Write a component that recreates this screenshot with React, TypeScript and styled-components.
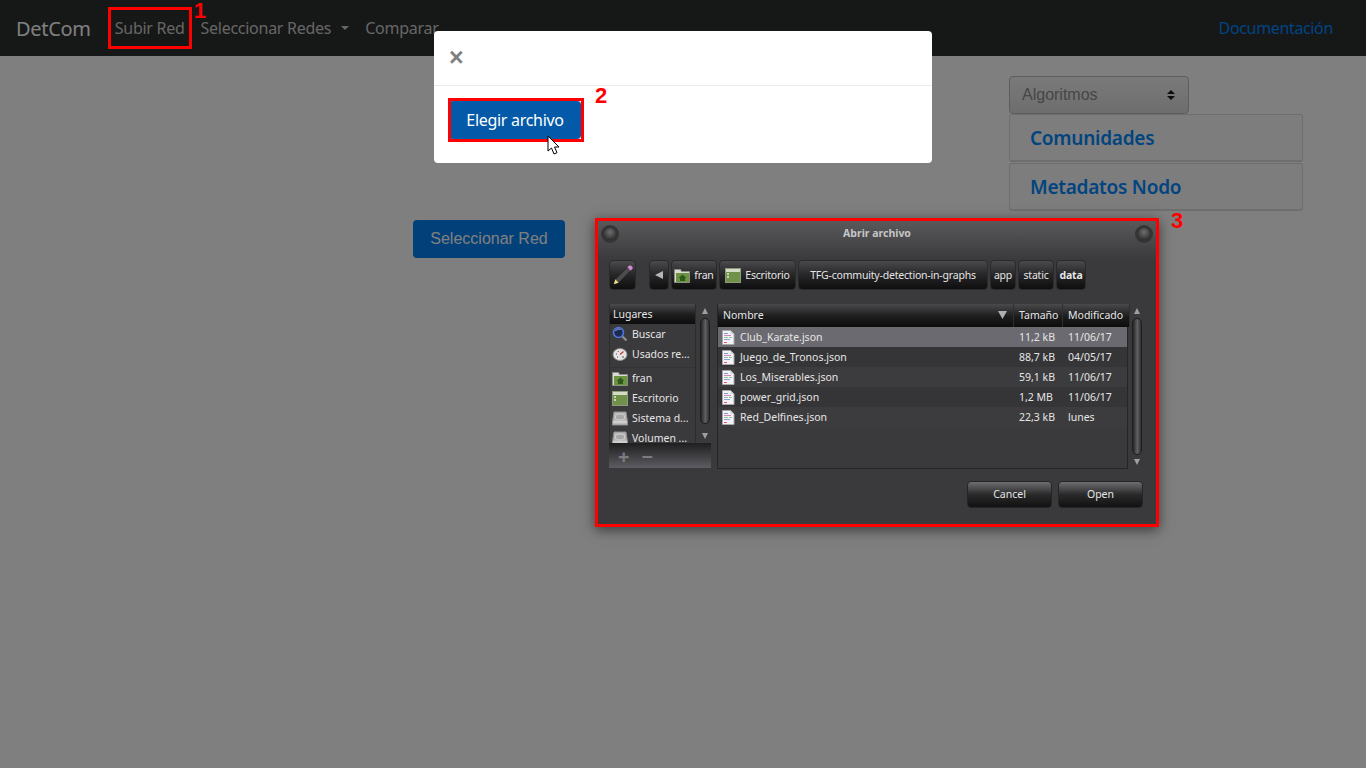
import React from 'react';
import styled, { createGlobalStyle } from 'styled-components';

const UI_FONT = '"Noto Sans", "Open Sans", sans-serif';

const GlobalStyle = createGlobalStyle`
    html, body {
        margin: 0;
        padding: 0;
        background: #fff;
        font-family: ${UI_FONT};
        overflow: hidden;
    }
    * {
        box-sizing: border-box;
    }
`;

const PLACES = [
    { label: 'Buscar', icon: 'search' },
    { label: 'Usados re...', icon: 'recent', separated: true },
    { label: 'fran', icon: 'home' },
    { label: 'Escritorio', icon: 'desktop' },
    { label: 'Sistema d...', icon: 'drive' },
    { label: 'Volumen ...', icon: 'drive' },
];

const FILES = [
    { name: 'Club_Karate.json', size: '11,2 kB', date: '11/06/17' },
    { name: 'Juego_de_Tronos.json', size: '88,7 kB', date: '04/05/17' },
    { name: 'Los_Miserables.json', size: '59,1 kB', date: '11/06/17' },
    { name: 'power_grid.json', size: '1,2 MB', date: '11/06/17' },
    { name: 'Red_Delfines.json', size: '22,3 kB', date: 'lunes' },
];

const FileIcon = () => (
    <svg width="14" height="15" viewBox="0 0 14 15">
        <path d="M1.500.5h8l3.500 3.500v10.500h-11.500z" fill="#f4f4f8" stroke="#a8a8ac" />
        <path d="M9.500.5v3.500h3.500z" fill="#d4d4d8" />
        <path d="M3 3.500h4" stroke="#7b9bd2" />
        <path d="M3 5.500h7" stroke="#cf86c2" />
        <path d="M3 7.500h4M8 7.500h3" stroke="#8ec29a" />
        <path d="M3 9.500h6" stroke="#8aa4dc" />
        <path d="M3 12.500h3" stroke="#ea5a52" />
    </svg>
);

const PlaceIcon: React.FC<{ kind: string }> = ({ kind }) => {
    if (kind === 'search') {
        return (
            <svg width="16" height="16" viewBox="0 0 16 16">
                <circle cx="6.500" cy="6.500" r="5" fill="#1d2b52" stroke="#4f78d8" strokeWidth="1.600" />
                <path d="M3.500 5a3.500 3.500 0 0 1 5-1.500" stroke="#9fb6ee" fill="none" />
                <path d="M10.500 10.500l4 4" stroke="#8c8c8c" strokeWidth="2.400" />
            </svg>
        );
    }
    if (kind === 'recent') {
        return (
            <svg width="16" height="16" viewBox="0 0 16 16">
                <ellipse cx="8" cy="8.500" rx="7" ry="6" fill="#e4e4e4" stroke="#8a8a8a" />
                <path d="M8 8.500l3.500-3" stroke="#c0392b" strokeWidth="1.200" />
                <path d="M4 8h1M6 5l.5 1M10 11h2M5 11h1" stroke="#555" />
            </svg>
        );
    }
    if (kind === 'home') {
        return (
            <svg width="16" height="15" viewBox="0 0 16 15">
                <path d="M.5 1.500h6l1 2h8v11h-15z" fill="#d9dcd4" stroke="#8a8d84" />
                <rect x="2" y="5" width="13" height="9" fill="#6c9440" />
                <path d="M4.500 10l4-3.500 4 3.500h-1.500v3h-5v-3z" fill="#2f5a1c" />
            </svg>
        );
    }
    if (kind === 'desktop') {
        return (
            <svg width="16" height="15" viewBox="0 0 16 15">
                <rect x=".5" y=".5" width="15" height="14" fill="#6f9149" stroke="#8c9a78" />
                <rect x="1" y="1" width="14" height="3" fill="#d5dcc5" />
                <path d="M2 6h2M2 9h2" stroke="#e6ebd9" strokeWidth="1.400" />
            </svg>
        );
    }
    return (
        <svg width="16" height="15" viewBox="0 0 16 15">
            <path d="M2 1h12l1.500 10v3h-15v-3z" fill="#b9b9b9" stroke="#8e8e8e" />
            <ellipse cx="8" cy="6" rx="4.500" ry="3" fill="#a6a6a6" stroke="#d0d0d0" />
            <path d="M1 11h14" stroke="#e2e2e2" />
        </svg>
    );
};

const PencilIcon = () => (
    <svg width="24" height="24" viewBox="0 0 22 22">
        <path d="M4 15L15 4l3 3L7 18z" fill="#4c4c4c" stroke="#222" strokeWidth=".6" />
        <path d="M15 4l1.500-1.500a1.400 1.400 0 0 1 2 0l1 1a1.400 1.400 0 0 1 0 2L18 7z" fill="#d48ad0" />
        <path d="M4 15l3 3-4.500 1.500z" fill="#f0e08a" />
    </svg>
);

const ArrowCursor = () => (
    <svg width="14" height="21" viewBox="0 0 14 21">
        <path d="M1 1v15l3.500-3 2.500 6 3-1.300-2.500-5.700h4.500z" fill="#fff" stroke="#000" strokeLinejoin="round" />
    </svg>
);

export default function App() {
    return (
        <>
            <GlobalStyle />
            <Page>
                <Navbar>
                    <Brand>DetCom</Brand>
                    <NavLink $marked>
                        Subir Red
                        <Callout $top={-5} $left={87}>1</Callout>
                    </NavLink>
                    <NavLink>
                        Seleccionar Redes
                        <Caret />
                    </NavLink>
                    <NavLink>Comparar</NavLink>
                    <DocsLink>Documentación</DocsLink>
                </Navbar>
                <Content>
                    <MainColumn>
                        <SelectNetworkButton>Seleccionar Red</SelectNetworkButton>
                    </MainColumn>
                    <SideColumn>
                        <AlgorithmSelect>
                            Algoritmos
                            <svg width="10" height="12" viewBox="0 0 10 12">
                                <path d="M1 5l4-4 4 4zM1 7l4 4 4-4z" fill="#1a1a1a" />
                            </svg>
                        </AlgorithmSelect>
                        <AccordionCard>Comunidades</AccordionCard>
                        <AccordionCard>Metadatos Nodo</AccordionCard>
                    </SideColumn>
                </Content>
                <Backdrop />
                <Modal>
                    <ModalHeader>
                        <CloseMark>×</CloseMark>
                    </ModalHeader>
                    <ModalBody>
                        <ChooseFileButton>
                            Elegir archivo
                            <Callout $top={-13} $left={146}>2</Callout>
                            <CursorHolder>
                                <ArrowCursor />
                            </CursorHolder>
                        </ChooseFileButton>
                    </ModalBody>
                </Modal>
                <FileDialog>
                    <Callout $top={-8} $left={573}>3</Callout>
                    <TitleBar>
                        <WindowDot />
                        <DialogTitle>Abrir archivo</DialogTitle>
                        <WindowDot />
                    </TitleBar>
                    <PathBar>
                        <PathButton $width={27} $gapRight={11}>
                            <PencilIcon />
                        </PathButton>
                        <PathButton $width={20}>
                            <svg width="8" height="8" viewBox="0 0 8 8">
                                <path d="M8 0v8L0 4z" fill="#b5b5b5" />
                            </svg>
                        </PathButton>
                        <PathButton $width={46}>
                            <PlaceIcon kind="home" />
                            fran
                        </PathButton>
                        <PathButton $width={77}>
                            <PlaceIcon kind="desktop" />
                            Escritorio
                        </PathButton>
                        <PathButton $width={190}>TFG-commuity-detection-in-graphs</PathButton>
                        <PathButton $width={26}>app</PathButton>
                        <PathButton $width={36}>static</PathButton>
                        <PathButton $width={30} $current>
                            data
                        </PathButton>
                    </PathBar>
                    <Panes>
                        <PlacesPane>
                            <PlacesTop>
                                <PlacesList>
                                    <PlacesHeader>Lugares</PlacesHeader>
                                    {PLACES.map((place) => (
                                        <PlaceRow key={place.label} $separated={place.separated}>
                                            <PlaceIcon kind={place.icon} />
                                            {place.label}
                                        </PlaceRow>
                                    ))}
                                </PlacesList>
                                <ScrollBar>
                                    <ScrollArrow />
                                    <ScrollThumb />
                                    <ScrollArrow $down $lead={9} />
                                </ScrollBar>
                            </PlacesTop>
                            <PlacesActions>
                                <span>+</span>
                                <span>−</span>
                            </PlacesActions>
                        </PlacesPane>
                        <ResizeGrip />
                        <FileTable>
                            <TableHead>
                                <HeadCell>
                                    Nombre
                                    <svg width="9" height="8" viewBox="0 0 9 8">
                                        <path d="M0 0h9L4.500 8z" fill="#b0b0b0" />
                                    </svg>
                                </HeadCell>
                                <HeadCell>Tamaño</HeadCell>
                                <HeadCell>Modificado</HeadCell>
                            </TableHead>
                            {FILES.map((file, index) => (
                                <FileRow key={file.name} $selected={index === 0} $odd={index % 2 === 1}>
                                    <NameCell>
                                        <FileIcon />
                                        {file.name}
                                    </NameCell>
                                    <span>{file.size}</span>
                                    <span>{file.date}</span>
                                </FileRow>
                            ))}
                        </FileTable>
                        <ScrollBar>
                            <ScrollArrow />
                            <ScrollThumb />
                            <ScrollArrow $down />
                        </ScrollBar>
                    </Panes>
                    <DialogActions>
                        <DialogButton>Cancel</DialogButton>
                        <DialogButton>Open</DialogButton>
                    </DialogActions>
                </FileDialog>
            </Page>
        </>
    );
}

const Page = styled.div`
    position: relative;
    width: 1366px;
    height: 768px;
    overflow: hidden;
    background: #fff;
`;

const Navbar = styled.nav`
    display: flex;
    align-items: center;
    height: 56px;
    padding: 0 33px 0 16px;
    background: #2c2e2f;
`;

const Brand = styled.div`
    margin-right: 16px;
    font-size: 20px;
    letter-spacing: -0.3px;
    color: #fff;
`;

const NavLink = styled.div<{ $marked?: boolean }>`
    position: relative;
    display: flex;
    align-items: center;
    padding: 8px;
    font-size: 16px;
    line-height: 24px;
    letter-spacing: -0.27px;
    color: #ccc;
    ${(props) =>
        props.$marked &&
        `&::after {
            content: '';
            position: absolute;
            z-index: 20;
            left: 1px;
            right: 1px;
            top: -1px;
            bottom: -1px;
            border: 3px solid #f00;
        }`}
`;

const Caret = styled.i`
    margin-left: 10px;
    border-top: 4.800px solid #ccc;
    border-left: 4.800px solid transparent;
    border-right: 4.800px solid transparent;
`;

const DocsLink = styled.div`
    margin-left: auto;
    font-size: 16px;
    letter-spacing: -0.35px;
    color: #0288ff;
`;

const Content = styled.main`
    display: flex;
    justify-content: space-between;
    padding: 20px 63px 0 413px;
`;

const MainColumn = styled.div`
    padding-top: 144px;
`;

const SelectNetworkButton = styled.div`
    width: 152px;
    height: 38px;
    border-radius: 4px;
    background: #0280f2;
    color: #fff;
    font: 16px/38px 'Liberation Sans', Arial, sans-serif;
    text-align: center;
`;

const SideColumn = styled.aside`
    display: flex;
    flex-direction: column;
    width: 294px;
`;

const AlgorithmSelect = styled.div`
    display: flex;
    align-items: center;
    justify-content: space-between;
    width: 180px;
    height: 38px;
    padding: 0 12px;
    border: 1px solid #bbb;
    border-radius: 4px;
    background: linear-gradient(#f4f4f4, #dcdcdc);
    color: #8c8c8c;
    font: 16px 'Liberation Sans', Arial, sans-serif;
`;

const AccordionCard = styled.div`
    display: flex;
    align-items: center;
    height: 48px;
    margin-bottom: 1px;
    padding-left: 20px;
    border: 1px solid #dcdcdc;
    border-bottom-width: 2px;
    border-radius: 3px;
    background: #fafafa;
    color: #0288ff;
    font-size: 19px;
    font-weight: 600;
    letter-spacing: -0.25px;
`;

const Backdrop = styled.div`
    position: absolute;
    inset: 0;
    z-index: 5;
    background: rgba(0, 0, 0, 0.5);
`;

const Modal = styled.section`
    position: absolute;
    z-index: 10;
    left: 434px;
    top: 31px;
    width: 498px;
    height: 132px;
    border-radius: 4px;
    background: #fff;
`;

const ModalHeader = styled.header`
    display: flex;
    align-items: center;
    height: 55px;
    padding: 0 15px 2px;
    border-bottom: 1px solid #e9ecef;
`;

const CloseMark = styled.span`
    color: #808080;
    font: bold 25px/1 'Liberation Sans', Arial, sans-serif;
`;

const ModalBody = styled.div`
    padding: 15px;
`;

const ChooseFileButton = styled.div`
    position: relative;
    width: 132px;
    height: 38px;
    border-radius: 4px;
    background: #045aa8;
    color: #fff;
    font-size: 16px;
    line-height: 38px;
    letter-spacing: -0.3px;
    text-align: center;
    &::after {
        content: '';
        position: absolute;
        left: -1px;
        right: -3px;
        top: -3px;
        bottom: -3px;
        border: 3px solid #f00;
    }
`;

const CursorHolder = styled.div`
    position: absolute;
    z-index: 2;
    left: 98px;
    top: 34px;
    display: flex;
`;

const Callout = styled.b<{ $top: number; $left: number }>`
    position: absolute;
    z-index: 20;
    top: ${(props) => props.$top}px;
    left: ${(props) => props.$left}px;
    color: #f00;
    font: bold 22px/16px 'Liberation Sans', Arial, sans-serif;
    letter-spacing: 0;
`;

const FileDialog = styled.section`
    position: absolute;
    z-index: 10;
    left: 595px;
    top: 218px;
    display: flex;
    flex-direction: column;
    width: 564px;
    height: 309px;
    border: 3px solid #f00;
    background: #3a393b;
    box-shadow: 0 3px 12px rgba(0, 0, 0, 0.55);
    color: #e6e6e6;
    font-size: 10.500px;
`;

const TitleBar = styled.header`
    display: flex;
    align-items: center;
    justify-content: space-between;
    height: 39px;
    padding: 0 3px 14px 3px;
    background: linear-gradient(#59585b, #3a393b);
`;

const WindowDot = styled.i`
    width: 18px;
    height: 18px;
    border: 3px solid #343435;
    border-radius: 50%;
    background: radial-gradient(circle at 50% 35%, #6e6e6e, #2a2a2a 85%);
`;

const DialogTitle = styled.h1`
    margin: 0 0 1px;
    color: #c6c6c6;
    font-size: 10.500px;
    font-weight: 700;
`;

const PathBar = styled.div`
    display: flex;
    gap: 2px;
    height: 30px;
    padding-left: 11px;
    letter-spacing: -0.2px;
`;

const PathButton = styled.div<{ $width: number; $gapRight?: number; $current?: boolean }>`
    display: flex;
    align-items: center;
    justify-content: center;
    gap: 4px;
    flex: none;
    width: ${(props) => props.$width}px;
    margin-right: ${(props) => props.$gapRight ?? 0}px;
    border: 1px solid #2a2a2b;
    border-radius: 4px;
    background: linear-gradient(#4a494b, #262527 50%, #0e0e0f);
    font-weight: ${(props) => (props.$current ? 700 : 400)};
    white-space: nowrap;
`;

const Panes = styled.div`
    display: flex;
    height: 165px;
    margin-top: 14px;
    padding-left: 11px;
`;

const PlacesPane = styled.div`
    display: flex;
    flex-direction: column;
    width: 102px;
`;

const PlacesTop = styled.div`
    display: flex;
    height: 139px;
    overflow: hidden;
`;

const PlacesList = styled.div`
    width: 87px;
    overflow: hidden;
    border-left: 1px solid #2c2c2d;
    border-right: 1px solid #2c2c2d;
`;

const PlacesHeader = styled.div`
    display: flex;
    align-items: center;
    height: 20px;
    padding-left: 3px;
    background: linear-gradient(#4a494b, #1c1c1d 55%, #0d0d0e);
`;

const PlaceRow = styled.div<{ $separated?: boolean }>`
    display: flex;
    align-items: center;
    gap: 4px;
    height: 20px;
    padding-left: 2px;
    white-space: nowrap;
    ${(props) =>
        props.$separated &&
        `
        height: 24px;
        padding-bottom: 4px;
        border-bottom: 1px solid #333234;
    `}
`;

const PlacesActions = styled.div`
    display: flex;
    align-items: center;
    gap: 12px;
    height: 25px;
    padding: 2px 0 0 9px;
    background: linear-gradient(#1f1f20, #5d5c62);
    color: #7b7b80;
    font-size: 20px;
    font-weight: 700;
    line-height: 16px;
`;

const ScrollBar = styled.div`
    display: flex;
    flex-direction: column;
    align-items: center;
    flex: none;
    width: 15px;
    padding: 3px 1px 3px 3px;
`;

const ScrollArrow = styled.i<{ $down?: boolean; $lead?: number }>`
    flex: none;
    margin: 1px 0 4px;
    border-left: 3.500px solid transparent;
    border-right: 3.500px solid transparent;
    ${(props) =>
        props.$down
            ? `border-top: 6px solid #a0a0a0; margin: ${props.$lead ?? 4}px 0 1px;`
            : 'border-bottom: 6px solid #a0a0a0;'}
`;

const ScrollThumb = styled.div`
    flex: 1;
    width: 10px;
    border: 1px solid #1d1d1e;
    border-radius: 5px;
    background: linear-gradient(90deg, #262627, #605f63 55%, #2f2f30);
`;

const ResizeGrip = styled.div`
    flex: none;
    width: 6px;
`;

const FileTable = styled.div`
    flex: none;
    width: 411px;
    border: 1px solid #252526;
    border-top: 0;
    background: #3a393b;
`;

const TableHead = styled.div`
    display: grid;
    grid-template-columns: 296px 49px 1fr;
    height: 23px;
`;

const HeadCell = styled.div`
    display: flex;
    align-items: center;
    justify-content: space-between;
    padding: 0 6px 2px 5px;
    border-right: 1px solid #2f2f30;
    background: linear-gradient(#4a494b, #1c1c1d 55%, #0d0d0e);
    white-space: nowrap;
`;

const FileRow = styled.div<{ $selected?: boolean; $odd?: boolean }>`
    display: grid;
    grid-template-columns: 296px 49px 1fr;
    align-items: center;
    height: 20px;
    background: ${(props) => (props.$selected ? '#6b6a70' : props.$odd ? '#353436' : '#3c3b3d')};
    white-space: nowrap;
    > span {
        padding-left: 5px;
    }
`;

const NameCell = styled.div`
    display: flex;
    align-items: center;
    gap: 5px;
    padding-left: 3px;
`;

const DialogActions = styled.footer`
    display: flex;
    justify-content: flex-end;
    gap: 6px;
    margin-top: 12px;
    padding-right: 13px;
`;

const DialogButton = styled.div`
    width: 85px;
    height: 27px;
    border: 1px solid #262627;
    border-radius: 4px;
    background: linear-gradient(#6e6d70, #2a2a2b 50%, #111112);
    font-size: 10.500px;
    line-height: 25px;
    text-align: center;
`;
